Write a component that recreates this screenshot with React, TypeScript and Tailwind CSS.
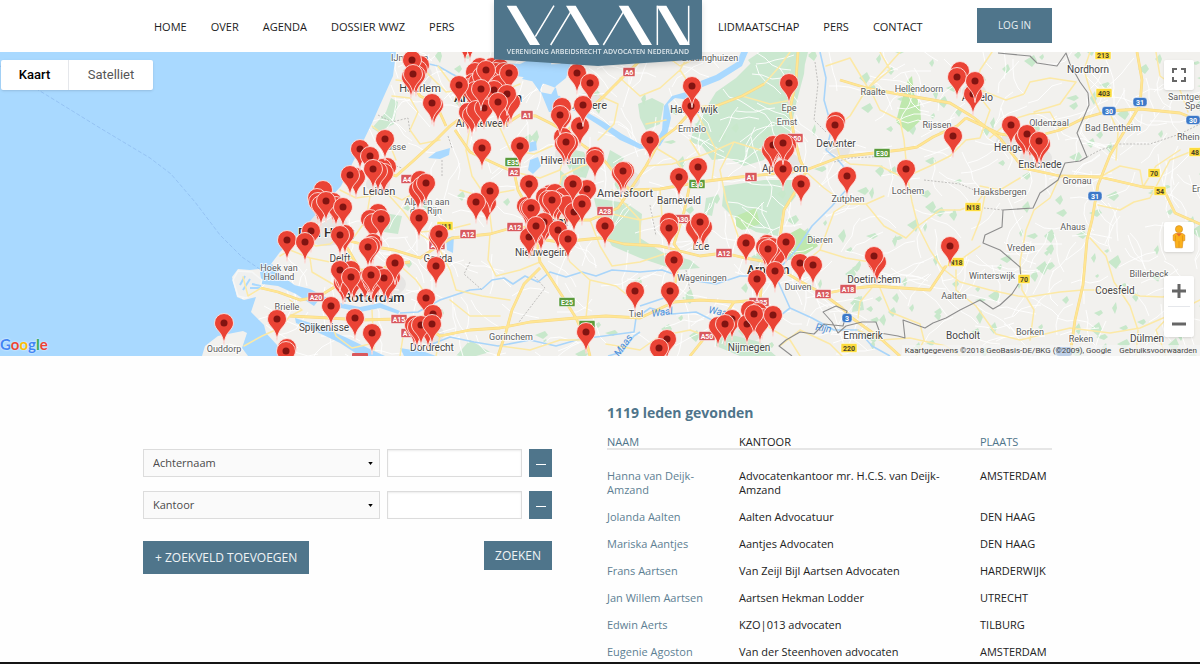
import React from "react";

/* ---------- map data ---------- */

type Point = [number, number];

/* pins whose dot is covered by a neighbour */
const backPins: Point[] = [
  [465, 41], [470, 40], [420, 65], [418, 70], [411, 77], [416, 75], [434, 105],
  [387, 167], [382, 168], [384, 173], [378, 171], [356, 177], [323, 190], [317, 198], [333, 202], [336, 206], [318, 202], [321, 205],
  [378, 213], [370, 219], [373, 223], [345, 234], [373, 243], [371, 246], [343, 283], [345, 281], [351, 270], [354, 280],
  [365, 280], [378, 275], [373, 283], [391, 277], [388, 282], [371, 278], [420, 180], [418, 190], [422, 186], [438, 236],
  [414, 325], [417, 327], [428, 327], [287, 348],
  [480, 67], [475, 72], [492, 67], [500, 68], [496, 72], [504, 72], [473, 83], [470, 88], [478, 82], [475, 91], [488, 91],
  [501, 98], [508, 105], [504, 108], [468, 112], [472, 115], [476, 110], [490, 80], [500, 84], [511, 102], [482, 76],
  [562, 107], [562, 117], [563, 137], [564, 144], [569, 143], [595, 156], [625, 171], [621, 173], [487, 203],
  [550, 194], [545, 197], [555, 193], [563, 197], [558, 203], [555, 201], [548, 200], [526, 206], [529, 208], [541, 231], [532, 234], [567, 205],
  [836, 121], [774, 148], [787, 145], [785, 149], [771, 150], [669, 222], [695, 228], [703, 227],
  [777, 254], [767, 244], [772, 247], [765, 247], [718, 326], [750, 310], [758, 312], [762, 318], [760, 322],
  [960, 71], [877, 262], [1030, 138], [1024, 137], [1035, 140], [1037, 146], [1041, 144],
];

const pins: Point[] = [
  [412, 60], [413, 74], [432, 103], [360, 149], [370, 156], [385, 139], [373, 169], [350, 175], [326, 201], [343, 207],
  [311, 231], [287, 240], [305, 242], [381, 219], [340, 235], [368, 247], [340, 270], [351, 277], [384, 278], [371, 275], [395, 263],
  [331, 306], [355, 318], [372, 333], [277, 319], [224, 323], [286, 351],
  [426, 183], [419, 218], [439, 234], [436, 266], [426, 298], [433, 314], [421, 325], [432, 324],
  [509, 73], [486, 70], [459, 85], [494, 90], [507, 94], [484, 108], [481, 89], [498, 102],
  [482, 148], [520, 146], [577, 73], [590, 83], [580, 126], [583, 105], [560, 115], [566, 142], [595, 159], [623, 171], [650, 140],
  [529, 184], [574, 212], [587, 189], [490, 191], [476, 202], [573, 184], [552, 200], [582, 204],
  [531, 208], [544, 222], [529, 237], [536, 226], [558, 230], [568, 239], [605, 226], [635, 291], [586, 332],
  [691, 106], [692, 86], [789, 83], [698, 167], [679, 177], [835, 125], [773, 145], [783, 169], [783, 143], [801, 184], [847, 176],
  [669, 228], [700, 222], [674, 260], [670, 291], [746, 243], [786, 242], [768, 249], [775, 271], [757, 279], [800, 263], [813, 265],
  [667, 339], [659, 348], [732, 319], [725, 324], [773, 315], [747, 324], [754, 314],
  [957, 77], [973, 94], [975, 81], [953, 136], [906, 169], [874, 256], [950, 246], [1011, 125], [1027, 134], [1039, 141],
];

type Anchor = "start" | "middle" | "end";
type Label = [string, number, number, number, Anchor?];

const labels: Label[] = [
  ["IJmuiden", 391, 61, 9, "start"], ["Haarlem", 420, 92, 11], ["Amsterdam", 522, 102, 13, "end"], ["Amstelveen", 482, 127, 10],
  ["Almere", 607, 109, 11, "end"], ["Lisse", 406, 150, 9, "end"], ["Leiden", 379, 195, 11], ["Alphen aan", 427, 205, 9], ["den Rijn", 426, 214, 9],
  ["Den Haag", 298, 237, 13, "start"], ["Delft", 340, 262, 10], ["Gouda", 438, 262, 10], ["Rotterdam", 374, 302, 13],
  ["Hoek van", 279, 271, 9], ["Holland", 279, 280, 9], ["Brielle", 287, 310, 9], ["Spijkenisse", 324, 331, 10], ["Ouddorp", 224, 352, 9],
  ["Dordrecht", 432, 351, 10], ["Gorinchem", 511, 340, 9], ["Tiel", 636, 317, 9], ["Nieuwegein", 541, 256, 10], ["Hilversum", 563, 164, 10],
  ["Utrecht", 568, 226, 13, "end"], ["Amersfoort", 625, 197, 11], ["Ermelo", 692, 132, 9], ["Harderwijk", 694, 113, 10],
  ["Biddinghuizen", 710, 61, 9], ["Epe", 789, 111, 9], ["Emst", 787, 125, 9], ["Apeldoorn", 785, 172, 10], ["Barneveld", 679, 204, 10],
  ["Wageningen", 702, 281, 9], ["Ede", 701, 250, 10], ["Arnhem", 747, 274, 12, "start"], ["Nijmegen", 749, 351, 10], ["Duiven", 798, 290, 9],
  ["Dieren", 820, 243, 9], ["Deventer", 836, 147, 10], ["Zutphen", 848, 202, 9], ["Raalte", 873, 95, 9], ["Hellendoorn", 919, 92, 9],
  ["Almelo", 993, 101, 10, "end"], ["Rijssen", 937, 128, 9], ["Lochem", 908, 194, 9], ["Haaksbergen", 1000, 195, 9], ["Doetinchem", 874, 283, 10],
  ["Aalten", 954, 299, 9], ["Winterswijk", 992, 279, 9], ["Emmerik", 863, 339, 10], ["Bocholt", 963, 339, 10], ["Hengelo", 994, 151, 10, "start"],
  ["Oldenzaal", 1049, 126, 9], ["Enschede", 1040, 168, 10], ["Nordhorn", 1088, 73, 10], ["Bad Bentheim", 1113, 131, 9], ["Gronau", 1077, 184, 9],
  ["Ahaus", 1073, 230, 9], ["Vreden", 1021, 251, 9], ["Billerbeck", 1149, 277, 9], ["Coesfeld", 1115, 294, 10], ["Borken", 1030, 335, 9],
  ["Reken", 1081, 342, 9], ["Dülmen", 1147, 342, 10], ["Rheine", 1177, 140, 9, "start"], ["Samtgemeinde", 1168, 100, 9, "start"],
  ["Spelle", 1185, 109, 9, "start"], ["Emsdetten", 1192, 192, 9, "start"],
];

type BadgeKind = "red" | "green" | "yellow" | "blue";
const badges: [string, number, number, BadgeKind][] = [
  ["A4", 407, 179, "red"], ["A1", 527, 115, "red"], ["E35", 513, 162, "green"], ["A2", 514, 172, "red"], ["A12", 468, 234, "red"],
  ["A12", 515, 227, "red"], ["A28", 605, 211, "red"], ["A6", 629, 72, "red"], ["A20", 316, 297, "red"], ["A15", 399, 319, "red"],
  ["A16", 409, 333, "red"], ["A12", 437, 245, "red"], ["A50", 795, 138, "red"], ["A1", 751, 177, "red"],
  ["E30", 697, 184, "green"], ["A30", 682, 219, "red"], ["A12", 724, 253, "red"], ["A325", 759, 302, "red"], ["A50", 707, 336, "red"],
  ["A12", 823, 294, "red"], ["A18", 848, 289, "red"], ["E30", 882, 153, "green"], ["N18", 973, 207, "yellow"], ["N18", 956, 262, "yellow"],
  ["N11", 445, 226, "yellow"], ["E25", 567, 302, "green"], ["E31", 587, 325, "green"], ["3", 847, 318, "blue"], ["220", 849, 348, "yellow"],
  ["213", 1103, 55, "yellow"], ["403", 1104, 93, "yellow"], ["31", 1140, 102, "blue"], ["30", 1109, 111, "blue"], ["30", 1193, 120, "blue"],
  ["48", 1195, 152, "yellow"], ["70", 1154, 173, "yellow"], ["54", 1160, 191, "yellow"], ["31", 1095, 196, "blue"], ["70", 1024, 279, "yellow"],
];

const badgeFill: Record<BadgeKind, string> = { red: "#d8585c", green: "#5b9b3c", yellow: "#fcdc3e", blue: "#3c78c8" };

const sea =
  "M0 52H396L393 76L380 105L372 123L358 152L341 186L322 207L300 233L280 252L268 268L250 270L238 269L232 277L237 297L244 300L256 297L251 312L264 325L266 333L277 345L285 356H248L242 348L247 333L243 331L218 336L205 346L202 356H0Z";

const lakes = [
  "M522 79L533 65L560 64L572 52H556L540 90L549 112L566 113L560 104L556 88L545 84Z",
  "M492 62L520 64L546 52H560L572 60L566 78L556 86L549 98L552 110L562 114L567 108L560 96L540 92L530 78L516 76Z",
  "M560 106L578 112L600 126L620 140L640 149L660 146L667 135L671 118L668 104L675 98L690 100L700 88L720 80L742 66L748 52H741L737 62L716 75L698 82L686 92L672 96L664 106L662 130L656 141L640 144L622 134L604 122L583 110Z",
  "M428 158L436 152L450 148L449 155L440 159Z",
  "M530 160L538 157L541 166L533 174L528 170Z",
  "M528 143L536 141L537 150L529 152Z",
  "M446 238L454 236L453 253L447 250Z",
  "M519 186L525 183L524 191Z",
  "M260 272L272 264L282 276L300 289L318 301L314 306L296 294L278 286L262 284Z",
  "M290 284L310 289L335 302L360 307L380 303L400 311L398 314L380 308L360 312L336 307L308 294L288 289Z",
  "M295 318L320 326L345 337L372 350L385 356H360L340 343L315 331L296 323Z",
  "M400 348L425 352L436 356H404Z",
];

const rivers = [
  "M400 313L418 312L440 300L470 290L482 289",
  "M482 289L492 280L504 278L513 284L525 276L538 282L550 272L566 277L582 272L596 276L612 270L640 272L662 270L690 280L716 284L740 276L756 276L772 268L780 268",
  "M430 345L450 337L474 342L498 346L530 340L556 346L580 339L604 336L634 332L636 318L650 308L672 314L696 312L716 322L742 328L772 322L790 308L772 268",
  "M790 308L812 318L834 330L858 330L872 346L890 356",
  "M608 356L622 352L634 336L640 332",
  "M780 268L796 250L812 226L832 206L846 190L848 172L838 160L826 150L832 128L824 100L826 78L820 52",
  "M404 70L420 62L438 66L452 74L464 80",
  "M664 298L640 306",
];

const highways = [
  "M455 130L470 152L500 166L514 172L518 190L530 212L536 236L540 262L552 280L566 302L576 318L586 340L590 356",
  "M506 124L520 115L536 116L552 124L566 132L584 146L604 160L618 178L630 190L660 189L700 182L740 177L790 172L806 170L840 157L900 150L917 147L933 137L957 126L966 118",
  "M438 246L452 238L490 234L515 227L532 228L546 240L560 242L600 238L624 244L660 246L700 256L724 253L745 258L768 262L798 280L823 294L842 308L852 318L880 338L900 356",
  "M345 240L370 246L394 250L420 258L438 246",
  "M360 156L376 170L396 176L412 162L436 140L450 126L458 120L470 124L506 126",
  "M404 70L420 96L436 104L446 126",
  "M340 236L352 256L360 270L376 272L392 264L410 262",
  "M261 288L278 292L300 300L318 297L336 286L352 272",
  "M290 316L330 318L360 320L399 319L420 322L440 336L470 330L500 328L530 322L576 318L606 316L640 318L674 302L700 300L734 302L760 300",
  "M540 268L524 284L512 310L506 332L498 356",
  "M566 132L580 118L604 96L616 84L630 70L650 52",
  "M630 190L618 208L604 214L590 220L566 220L546 216",
  "M630 190L646 166L656 148L660 140L676 128L694 108L716 106L742 96L764 84",
  "M798 52L796 80L790 110L794 136L800 160L806 172L796 190L784 210L780 238L770 262",
  "M690 184L684 212L674 244L680 252L672 302",
  "M734 302L722 320L706 336L690 356",
  "M768 262L762 280L760 300L748 326",
  "M823 294L848 289L874 286L930 290L946 266",
  "M840 80L870 89L950 103L973 117L1000 138L1023 168L1060 176L1100 177L1143 187L1163 188L1175 213L1200 224",
  "M966 118L1000 134L1030 138L1060 130L1084 118L1109 111L1140 109L1180 113L1200 121",
  "M1137 52L1142 80L1140 105L1125 130L1110 155L1098 185L1092 220L1087 240L1083 285L1075 320L1070 356",
];

const roads = [
  "M396 80L412 82L430 90L440 108", "M392 96L410 98L418 112L410 130L420 144L440 140", "M412 54L430 76L446 92L460 90", "M438 66L456 90L470 96L500 92L520 84",
  "M372 126L388 138L392 150L396 160", "M340 190L356 198L370 196L386 192L402 200L420 190", "M370 196L366 220L352 240", "M300 236L316 246L330 244L340 236",
  "M280 256L290 250L310 258L330 262L352 258", "M310 258L312 272L336 286", "M386 192L404 212L420 234L438 246", "M420 232L446 230L470 224",
  "M261 288L248 296L243 277", "M290 300L302 310L290 316L280 328L262 336L244 346", "M330 318L336 336L352 348L370 344", "M372 310L374 350", "M420 322L430 300L416 280L396 262",
  "M440 336L436 356", "M438 246L450 270L456 290L482 296L510 300", "M490 234L488 260L496 276L520 270L540 262", "M450 300L470 316L500 316", "M470 126L466 150L472 176L488 200L492 232",
  "M500 128L510 150L534 154L552 146", "M514 172L540 178L560 170L566 150", "M546 216L556 198L562 176L582 166L604 160", "M590 220L600 246L612 266L640 262L664 254",
  "M560 242L570 262L590 280L616 286L636 302", "M590 280L586 318", "M612 190L640 220L640 246", "M660 189L662 216L670 244", "M646 166L672 164L700 156L716 150L734 142L760 150L780 156",
  "M656 148L676 160L690 180", "M694 108L706 130L716 150L712 180", "M600 96L618 104L614 124L598 140", "M620 78L640 96L660 88L680 70L690 52", "M646 124L666 120", "M680 70L692 88",
  "M660 52L680 66L700 56", "M742 96L770 104L792 100", "M734 142L720 170L726 200L736 230L745 258", "M700 156L690 140", "M806 172L824 188L846 204L866 204L884 196",
  "M840 157L832 130L850 116L866 90L890 70L880 52", "M826 66L850 58L868 88L900 52", "M870 89L880 110L900 120L904 140L908 180L912 202L918 226L906 238L884 226L866 204",
  "M918 226L940 210L960 210L976 204L986 190", "M918 226L930 250L942 268L960 260L980 246", "M908 176L930 166L950 156L966 140L980 138", "M840 157L850 164L880 166L900 176",
  "M820 250L834 212L846 204", "M820 250L800 266", "M820 250L846 258L870 262L880 278", "M880 278L860 302L858 318", "M880 288L890 312L920 324L924 340L916 356",
  "M942 268L960 282L990 290L1018 296L1028 297L1060 292L1083 290L1120 290L1140 296L1163 297L1190 286", "M956 270L956 290L976 306L996 334L1020 340L1070 328L1110 333L1140 328L1170 315L1200 300",
  "M980 138L990 110L976 92L980 70L992 52", "M990 138L1010 120L1030 114L1050 112L1060 130", "M980 90L1006 100L1024 94L1030 82L1050 78L1076 82", "M1076 82L1060 104L1034 112",
  "M1100 112L1090 90L1084 70L1090 52", "M1109 111L1118 132L1116 160", "M1060 176L1050 198L1034 210L1026 230L1020 262L1022 290L1034 310L1030 340", "M1100 177L1120 166L1140 170L1143 187",
  "M1098 205L1120 210L1134 202L1150 198L1170 160L1200 148", "M1090 238L1106 256L1114 282L1130 306L1138 330L1136 356", "M1143 187L1156 166L1180 150", "M1170 315L1156 330L1166 356",
  "M1156 52L1160 76L1180 90L1188 112", "M980 186L1000 190L1020 178", "M986 190L980 220L972 240", "M780 346L800 330L830 344L842 356", "M858 330L880 340L910 338L946 346L960 356", "M760 322L790 340L800 356",
  "M606 344L640 350L660 336L690 330L706 336", "M500 346L530 350L560 340L586 340", "M460 190L480 196L514 190", "M404 330L400 356", "M764 84L780 66L790 52", "M660 216L640 220L612 214",
];

const forests = [
  "M700 118L716 92L736 78L752 62L806 52L804 74L796 104L790 134L772 142L764 160L744 166L728 158L712 160L702 146L690 142L694 128Z",
  "M748 60L760 52H808L800 84L788 80L770 90Z",
  "M724 186L764 180L792 180L796 196L782 214L778 236L756 232L738 222L722 206Z",
  "M742 212L756 206L760 226L744 230Z",
  "M594 198L626 203L642 214L640 238L662 252L690 260L700 268L676 270L640 258L612 246L600 226Z",
  "M566 148L584 152L590 166L586 178L574 176Z",
  "M638 104L652 98L664 104L660 124L646 130L640 118Z",
  "M378 204L390 214L402 216L398 234L384 232L378 226Z",
  "M391 98L398 102L394 124L378 132L372 128L386 112Z",
  "M560 170L574 182L580 200L570 206L560 190Z",
  "M706 198L716 196L712 216L704 214Z",
  "M610 150L624 158L616 170L606 164Z",
  "M712 330L760 342L776 356H740L716 346Z",
  "M470 340L490 352L476 356H456Z",
  "M854 298L862 296L864 310L852 312Z",
];

const meadows = [
  "M736 216L756 208L760 224L742 230L736 226Z",
  "M778 240L800 228L812 236L818 246L800 258L788 260L776 252Z",
  "M908 80L912 76L914 94L920 104L921 120L908 132L896 122L900 106Z",
];

const border =
  "M998 53L1030 56L1037 63L1057 66L1066 53L1070 64L1080 82L1088 93L1089 105L1077 133L1087 157L1080 161L1065 163L1058 180L1040 193L1033 208L1003 210L1002 227L985 235L983 243L1000 250L1020 267L1021 280L1012 294L1000 305L993 309L980 300L960 310L946 318L933 323L925 328L914 324L903 320L905 338L898 336L880 333L876 322L862 322L846 326L838 333L832 322L823 312L836 306L847 311L843 326L824 324L814 334L800 332L786 340L779 346L792 356";

const ferry = "M0 66L40 91L100 128L150 158L171 174L195 202L220 235L242 257L264 272";

/* deterministic scatter for local streets and small woods */
function seeded(seed: number) {
  let s = seed;
  return () => {
    s = (s * 16807) % 2147483647;
    return s / 2147483647;
  };
}

function localStreets() {
  const rnd = seeded(4211);
  const out: string[] = [];
  for (let i = 0; i < 520; i++) {
    let x = 250 + rnd() * 950;
    let y = 52 + rnd() * 304;
    let a = rnd() * Math.PI * 2;
    let d = `M${x.toFixed(0)} ${y.toFixed(0)}`;
    for (let k = 0; k < 4; k++) {
      a += (rnd() - 0.5) * 1.1;
      x += Math.cos(a) * 10;
      y += Math.sin(a) * 10;
      d += `L${x.toFixed(0)} ${y.toFixed(0)}`;
    }
    out.push(d);
  }
  return out.join("");
}

function smallWoods() {
  const rnd = seeded(977);
  const out: string[] = [];
  for (let i = 0; i < 210; i++) {
    const x = i < 60 ? 400 + rnd() * 400 : 800 + rnd() * 400;
    const y = 52 + rnd() * 304;
    const w = 3 + rnd() * 7;
    const h = 2 + rnd() * 5;
    out.push(
      `M${x.toFixed(0)} ${y.toFixed(0)}l${w.toFixed(0)} -${h.toFixed(0)}l${(w / 3).toFixed(0)} ${h.toFixed(0)}l-${(w / 2).toFixed(0)} ${h.toFixed(0)}z`
    );
  }
  return out.join("");
}

const towns: [number, number, number, number][] = [
  [488, 92, 26, 18], [372, 284, 34, 16], [326, 228, 22, 18], [550, 214, 20, 18], [418, 76, 14, 14], [786, 164, 14, 12], [766, 262, 16, 10],
  [748, 330, 16, 12], [1036, 158, 16, 10], [1006, 142, 10, 8], [628, 180, 12, 10], [378, 184, 12, 9], [430, 334, 14, 10], [590, 100, 14, 8],
  [838, 150, 12, 8], [974, 92, 12, 9], [563, 154, 8, 8], [700, 240, 8, 8],
];

const STREETS = localStreets();
const WOODS = smallWoods();

function MapCanvas() {
  return (
    <svg viewBox="0 52 1200 304" preserveAspectRatio="xMidYMid slice" className="block h-[304px] w-full" role="img" aria-label="Kaart">
      <defs>
        <path
          id="pin-shape"
          d="M0 21.500C-.8 14.500-2.600 11.400-5.600 8C-8 5.300-9.500 3-9.500 0A9.500 9.500 0 0 1 9.500 0C9.500 3 8 5.300 5.600 8C2.600 11.400 .8 14.500 0 21.500Z"
          fill="#ea4335"
          stroke="#fde3e0"
          strokeWidth="0.900"
        />
        <g id="pin">
          <use href="#pin-shape" />
          <circle r="3.500" fill="#811411" />
        </g>
      </defs>
      <rect x="0" y="52" width="1200" height="304" fill="#f2f1ee" />
      {towns.map(([x, y, rx, ry], i) => (
        <ellipse key={i} cx={x} cy={y} rx={rx} ry={ry} fill="#e6e5e3" />
      ))}
      <path d={forests.join("")} fill="#cbe8d0" />
      <path d={WOODS} fill="#c8e8cb" />
      <path d={meadows.join("")} fill="#bfe8ae" />
      <path d={STREETS} fill="none" stroke="#ffffff" strokeWidth="0.900" />
      <path d={sea} fill="#a9d9ff" />
      <path d={lakes.join("")} fill="#a9d9ff" />
      <path d={rivers.join("")} fill="none" stroke="#a9d5fa" strokeWidth="1.600" strokeLinejoin="round" />
      <path d="M233 280L238 271L252 272L262 280L258 290L246 298L238 296Z" fill="#eff0ef" stroke="#f6f7f7" strokeWidth="1.500" />
      <path d="M240 285L245 276M243 290L250 279M250 288H260M252 284L261 286" fill="none" stroke="#a9d9ff" strokeWidth="2" />
      <path d={ferry} fill="none" stroke="#8fbdf0" strokeWidth="0.800" strokeDasharray="4 2" />
      <path
        d="M378 115L392 122L408 118L410 132M396 166L402 168M442 160V176M448 136L452 148M470 262L464 274L482 290M532 274L545 288L516 326M650 205L656 236M686 270L690 290M815 62L818 84L814 120L826 132M834 162L850 158L890 156M924 180L960 184L974 190M1003 210L984 208M1087 157L1100 150L1120 144L1150 144L1180 134L1200 124"
        fill="none"
        stroke="#b3b1ae"
        strokeWidth="0.800"
        strokeDasharray="2 1.500"
      />
      <path d={roads.join("")} fill="none" stroke="#fce9a6" strokeWidth="1.500" strokeLinejoin="round" strokeLinecap="round" />
      <path d={highways.join("")} fill="none" stroke="#f6d888" strokeWidth="2.800" strokeLinejoin="round" />
      <path d={highways.join("")} fill="none" stroke="#ffe693" strokeWidth="1.800" strokeLinejoin="round" />
      <path d={border} fill="none" stroke="#8d8d8d" strokeWidth="1.100" strokeLinejoin="round" />
      <rect x="1056" y="347" width="16" height="9" rx="3" fill="#3c78c8" />
      <rect x="352" y="353" width="16" height="6" rx="1" fill="#d8585c" />
      <g fontFamily="Roboto, sans-serif" fontStyle="italic" fontSize="10" fill="#4f8fd8">
        <text x="652" y="317" transform="rotate(-8 652 317)">Waal</text>
        <text x="708" y="313" transform="rotate(10 708 313)">Waal</text>
        <text x="815" y="330" transform="rotate(10 815 330)">Rijn</text>
        <text x="619" y="357" transform="rotate(-55 619 357)">Maas</text>
      </g>
      <g fontFamily="Roboto, sans-serif" stroke="#ffffff" strokeWidth="2" strokeOpacity="0.750" paintOrder="stroke" strokeLinejoin="round">
        {labels.map(([t, x, y, s, a]) => (
          <text
            key={t}
            x={x}
            y={y}
            fontSize={s}
            textAnchor={a ?? "middle"}
            fill={s > 11 ? "#2f2f2f" : s > 9 ? "#454545" : "#5c5c5c"}
            fontWeight={s > 11 ? 500 : 400}
          >
            {t}
          </text>
        ))}
      </g>
      {badges.map(([t, x, y, k], i) => {
        const w = t.length * 4 + (k === "blue" ? 6 : 4);
        return (
          <g key={i}>
            <rect x={x - w / 2} y={y - 4.5} width={w} height="9" rx={k === "blue" ? 3 : 1} fill={badgeFill[k]} stroke="#ffffff" strokeWidth="0.500" />
            <text
              x={x}
              y={y + 2.5}
              fontSize="7"
              fontWeight="700"
              fontFamily="Roboto, sans-serif"
              textAnchor="middle"
              fill={k === "yellow" ? "#4a4327" : "#ffffff"}
            >
              {t}
            </text>
          </g>
        );
      })}
      {backPins.map(([x, y], i) => (
        <use key={i} href="#pin-shape" x={x} y={y} />
      ))}
      {pins.map(([x, y], i) => (
        <use key={i} href="#pin" x={x} y={y} />
      ))}
    </svg>
  );
}

/* ---------- map controls ---------- */

function MapSection() {
  return (
    <section className="relative overflow-hidden">
      <MapCanvas />
      <div className="absolute top-2 left-px flex h-[30px] rounded-xs bg-white font-[Roboto,sans-serif] text-[13px] shadow">
        <button type="button" className="w-[68px] border-r border-gray-200 font-medium text-black">Kaart</button>
        <button type="button" className="w-[84px] text-[#565656]">Satelliet</button>
      </div>
      <button
        type="button"
        aria-label="Volledig scherm"
        className="absolute top-2 right-[6px] flex size-[30px] items-center justify-center rounded-xs bg-white shadow"
      >
        <svg viewBox="0 0 14 14" className="size-[14px]" fill="none" stroke="#666666" strokeWidth="2">
          <path d="M1 5V1H5M9 1H13V5M13 9V13H9M5 13H1V9" />
        </svg>
      </button>
      <button
        type="button"
        aria-label="Street View"
        className="absolute top-[170px] right-[6px] flex size-[30px] items-center justify-center rounded-xs bg-white shadow"
      >
        <svg viewBox="0 0 14 24" className="h-[24px] w-[14px]">
          <path d="M3.500 8.500H10.500L12.800 10V15.500L11 16L10.300 22.800H3.700L3 16L1.200 15.500V10Z" fill="#fbb11b" stroke="#d98a17" strokeWidth="0.600" />
          <circle cx="7" cy="4.200" r="3.600" fill="#fbb11b" stroke="#c98a2a" strokeWidth="0.600" />
          <path d="M4.200 8.500H9.800L7 11.500Z" fill="#ea6a2c" />
          <path d="M7 16V22.800M3.500 10.500V16M10.500 10.500V16" stroke="#dd8d18" strokeWidth="0.700" />
        </svg>
      </button>
      <div className="absolute top-[224px] right-[6px] flex w-[30px] flex-col items-center rounded-xs bg-white shadow">
        <button type="button" aria-label="Inzoomen" className="flex h-[30px] w-full items-center justify-center">
          <svg viewBox="0 0 14 14" className="size-[14px]" stroke="#666666" strokeWidth="3">
            <path d="M0 7H14M7 0V14" />
          </svg>
        </button>
        <span className="h-px w-[22px] bg-gray-200" />
        <button type="button" aria-label="Uitzoomen" className="flex h-[30px] w-full items-center justify-center">
          <svg viewBox="0 0 14 14" className="size-[14px]" stroke="#666666" strokeWidth="3">
            <path d="M0 9H14" />
          </svg>
        </button>
      </div>
      <div className="absolute bottom-[3px] left-0 font-[Lato,sans-serif] text-[15px] leading-[18px] font-bold [text-shadow:0_0_2px_white]">
        <span className="text-[#4285f4]">G</span>
        <span className="text-[#ea4335]">o</span>
        <span className="text-[#fbbc05]">o</span>
        <span className="text-[#4285f4]">g</span>
        <span className="text-[#34a853]">l</span>
        <span className="text-[#ea4335]">e</span>
      </div>
      <div className="absolute right-0 bottom-0 flex h-[11px] items-center gap-2 bg-[#f5f5f5]/70 px-[3px] font-[Roboto,sans-serif] text-[8px] leading-[11px] text-[#444444]">
        <span>Kaartgegevens ©2018 GeoBasis-DE/BKG (©2009), Google</span>
        <a href="#voorwaarden">Gebruiksvoorwaarden</a>
      </div>
    </section>
  );
}

/* ---------- header ---------- */

function Logo() {
  return (
    <a href="#home" aria-label="VAAN" className="relative z-10 block h-[66px] w-[208px] shrink-0 drop-shadow-md">
      <svg viewBox="41 0 624 198" className="block size-full">
        <path d="M41 0H665V178L353 198L41 178Z" fill="#4f758b" />
        <g fill="#ffffff">
          <path d="M79 17H108L179 135H149Z" />
          <path d="M257 17H286L357 135H327Z" />
          <path d="M415 17H444L515 135H485Z" />
          <path d="M529 17H558L628 135H598Z" />
        </g>
        <path d="M221 17L165 110M272 34L211 135M430 34L369 135M531 17V135M625 17V135" fill="none" stroke="#ffffff" strokeWidth="4.500" />
        <text x="353" y="161" textAnchor="middle" fontFamily="'Open Sans', sans-serif" fontSize="21" fontWeight="600" fill="#dbe5ea">
          VERENIGING ARBEIDSRECHT ADVOCATEN NEDERLAND
        </text>
      </svg>
    </a>
  );
}

function NavLinks({ items }: { items: string[] }) {
  return (
    <ul className="flex items-center gap-6 whitespace-nowrap">
      {items.map((item) => (
        <li key={item}>
          <a href={`#${item.toLowerCase().replace(" ", "-")}`}>{item}</a>
        </li>
      ))}
    </ul>
  );
}

function Header() {
  return (
    <header className="flex h-[52px] items-start bg-white pr-[148px] pl-[143px] text-[11px] text-[#1c1c1c]">
      <nav aria-label="Hoofdmenu" className="flex h-[54px] w-[351px] shrink-0 items-center pl-[11px]">
        <NavLinks items={["HOME", "OVER", "AGENDA", "DOSSIER WWZ", "PERS"]} />
      </nav>
      <Logo />
      <nav aria-label="Leden" className="flex h-[54px] items-center pl-4">
        <NavLinks items={["LIDMAATSCHAP", "PERS", "CONTACT"]} />
      </nav>
      <a href="#login" className="mt-2 ml-auto flex h-[35px] w-[75px] items-center justify-center bg-[#4f758b] text-[10px] text-[#e9eff2]">
        LOG IN
      </a>
    </header>
  );
}

/* ---------- search form ---------- */

function SearchRow({ id, value }: { id: string; value: string }) {
  return (
    <div className="flex h-[28px] items-stretch gap-[7px]">
      <div className="relative flex-1">
        <select
          id={id}
          aria-label="Zoekveld"
          defaultValue={value}
          className="h-full w-full appearance-none border border-[#dcdcdc] bg-[#fafafa] pl-[9px] text-[11px] text-[#4a4a4a]"
        >
          <option>Achternaam</option>
          <option>Kantoor</option>
        </select>
        <svg viewBox="0 0 6 4" className="pointer-events-none absolute top-[13px] right-[7px] h-[3px] w-[5px]">
          <path d="M0 0H6L3 4Z" fill="#000000" />
        </svg>
      </div>
      <input
        type="text"
        aria-label={`Waarde voor ${value}`}
        className="w-[135px] border border-[#dcdcdc] bg-white px-2 text-[11px] shadow-[inset_0_1px_2px_rgba(0,0,0,0.08)]"
      />
      <button type="button" aria-label="Zoekveld verwijderen" className="flex w-[23px] items-center justify-center bg-[#4f758b]">
        <span className="mt-[2px] h-px w-[10px] bg-white" />
      </button>
    </div>
  );
}

function SearchForm() {
  return (
    <form className="flex w-[409px] shrink-0 flex-col pt-[93px]" onSubmit={(e) => e.preventDefault()}>
      <div className="flex flex-col gap-[14px]">
        <SearchRow id="veld-1" value="Achternaam" />
        <SearchRow id="veld-2" value="Kantoor" />
      </div>
      <div className="mt-[22px] flex items-start justify-between text-[12px] text-[#f0f4f6]">
        <button type="button" className="h-[33px] bg-[#4f758b] px-3">+ ZOEKVELD TOEVOEGEN</button>
        <button type="submit" className="h-[29px] bg-[#4f758b] px-[11px]">ZOEKEN</button>
      </div>
    </form>
  );
}

/* ---------- results ---------- */

const members = [
  ["Hanna van Deijk-Amzand", "Advocatenkantoor mr. H.C.S. van Deijk-Amzand", "AMSTERDAM"],
  ["Jolanda Aalten", "Aalten Advocatuur", "DEN HAAG"],
  ["Mariska Aantjes", "Aantjes Advocaten", "DEN HAAG"],
  ["Frans Aartsen", "Van Zeijl Bijl Aartsen Advocaten", "HARDERWIJK"],
  ["Jan Willem Aartsen", "Aartsen Hekman Lodder", "UTRECHT"],
  ["Edwin Aerts", "KZO|013 advocaten", "TILBURG"],
  ["Eugenie Agoston", "Van der Steenhoven advocaten", "AMSTERDAM"],
];

function Results() {
  return (
    <section className="min-w-0 flex-1 pt-[48px]">
      <h2 className="text-[14px] leading-[18px] font-bold text-[#4f758b]">1119 leden gevonden</h2>
      <table className="mt-[13px] w-full table-fixed border-collapse text-left text-[11px] leading-[14px] text-[#222222]">
        <colgroup>
          <col className="w-[132px]" />
          <col />
          <col className="w-[72px]" />
        </colgroup>
        <thead>
          <tr className="border-b-2 border-[#e6e6e6] leading-[13px]">
            <th className="p-0 font-normal">
              <a href="#naam" className="text-[#4f758b]">NAAM</a>
            </th>
            <th className="p-0 font-normal">KANTOOR</th>
            <th className="p-0 font-normal">
              <a href="#plaats" className="text-[#4f758b]">PLAATS</a>
            </th>
          </tr>
          <tr aria-hidden="true">
            <td colSpan={3} className="h-[14px] p-0" />
          </tr>
        </thead>
        <tbody className="[&>tr:last-child>td]:pb-0">
          {members.map(([name, office, city]) => (
            <tr key={name} className="align-top">
              <td className="pt-[6px] pr-6 pb-[7px]">
                <a href="#lid" className="text-[#5d7f93]">{name}</a>
              </td>
              <td className="pt-[6px] pr-8 pb-[7px]">{office}</td>
              <td className="pt-[6px] pb-[7px]">{city}</td>
            </tr>
          ))}
        </tbody>
      </table>
    </section>
  );
}

export default function App() {
  return (
    <div className="min-h-screen border-b-2 border-[#151515] bg-[#fefefe] font-['Open_Sans',sans-serif]">
      <Header />
      <MapSection />
      <main className="flex gap-[55px] pr-[148px] pl-[143px]">
        <SearchForm />
        <Results />
      </main>
    </div>
  );
}
